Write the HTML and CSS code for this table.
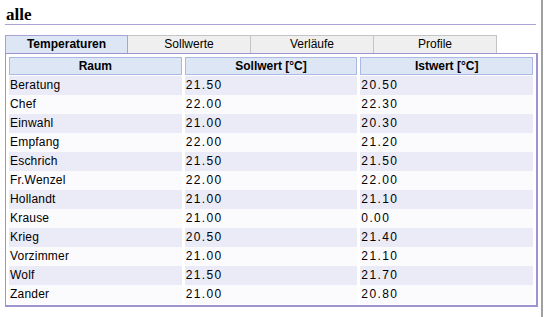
FILE: index.html
```html
<!DOCTYPE html>
<html>
<head>
<meta charset="utf-8">
<link rel="stylesheet" href="styles.css">
</head>
<body>
<div class="page">
  <h1 class="title">alle</h1>
  <div class="tabs">
    <div class="tab active">Temperaturen</div>
    <div class="tab">Sollwerte</div>
    <div class="tab">Verläufe</div>
    <div class="tab">Profile</div>
  </div>
  <div class="panel">
    <table class="grid">
      <colgroup><col class="c1"><col class="c2"><col class="c3"></colgroup>
      <thead>
        <tr><th>Raum</th><th>Sollwert [°C]</th><th>Istwert [°C]</th></tr>
      </thead>
      <tbody>
        <tr><td>Beratung</td><td class="num">21.50</td><td class="num">20.50</td></tr>
        <tr><td>Chef</td><td class="num">22.00</td><td class="num">22.30</td></tr>
        <tr><td>Einwahl</td><td class="num">21.00</td><td class="num">20.30</td></tr>
        <tr><td>Empfang</td><td class="num">22.00</td><td class="num">21.20</td></tr>
        <tr><td>Eschrich</td><td class="num">21.50</td><td class="num">21.50</td></tr>
        <tr><td>Fr.Wenzel</td><td class="num">22.00</td><td class="num">22.00</td></tr>
        <tr><td>Hollandt</td><td class="num">21.00</td><td class="num">21.10</td></tr>
        <tr><td>Krause</td><td class="num">21.00</td><td class="num">0.00</td></tr>
        <tr><td>Krieg</td><td class="num">20.50</td><td class="num">21.40</td></tr>
        <tr><td>Vorzimmer</td><td class="num">21.00</td><td class="num">21.10</td></tr>
        <tr><td>Wolf</td><td class="num">21.50</td><td class="num">21.70</td></tr>
        <tr><td>Zander</td><td class="num">21.00</td><td class="num">20.80</td></tr>
      </tbody>
    </table>
  </div>
</div>
</body>
</html>
```
FILE: styles.css
```css
html, body {
  margin: 0;
  padding: 0;
  background: #ffffff;
}
.page {
  box-sizing: border-box;
  width: 543px;
  height: 317px;
  border-right: 2px solid #a0a0a0;
  padding: 0 3px 0 5px;
  font-family: "Liberation Sans", Arial, sans-serif;
  font-size: 12px;
  color: #000;
}
.title {
  margin: 0 2px 0 0;
  padding: 5px 0 0 1px;
  height: 19px;
  font-family: "Liberation Serif", "Times New Roman", serif;
  font-size: 17px;
  font-weight: bold;
  line-height: 19px;
  border-bottom: 1px solid #aaa3d8;
}
.tabs {
  display: flex;
  margin-top: 10px;
  height: 18px;
}
.tab {
  box-sizing: border-box;
  width: 123px;
  height: 18px;
  line-height: 16px;
  text-align: center;
  background: #efefef;
  border: 1px solid #c4c4c4;
  border-bottom: none;
  border-left: none;
}
.tab.active {
  width: 123px;
  background: #dce6f5;
  border: 1px solid #a8a2d6;
  border-bottom: none;
  font-weight: bold;
}
.panel {
  box-sizing: border-box;
  height: 254px;
  border: 1px solid #9c93cf;
  border-width: 1px 2px 2px 1px;
  padding: 0;
}
.grid {
  width: 100%;
  table-layout: fixed;
  border-collapse: separate;
  border-spacing: 3px 0;
  margin-top: 3px;
}
.grid col {
  width: 33.33%;
}
.grid th {
  height: 16px;
  padding: 0;
  background: #dce6f5;
  border: 1px solid #aab9e2;
  font-weight: bold;
  text-align: center;
  line-height: 16px;
}
.grid td {
  height: 19px;
  padding: 0 0 0 1px;
  line-height: 19px;
  text-align: left;
  letter-spacing: 0.2px;
}
.grid tbody tr:nth-child(odd) td {
  background: #ebebf8;
}
.grid tbody tr:nth-child(even) td {
  background: #fbfbfe;
}
.grid tbody tr:first-child td {
  border-top: 1px solid #fff;
}
.grid td.num {
  letter-spacing: 1.4px;
}
```
